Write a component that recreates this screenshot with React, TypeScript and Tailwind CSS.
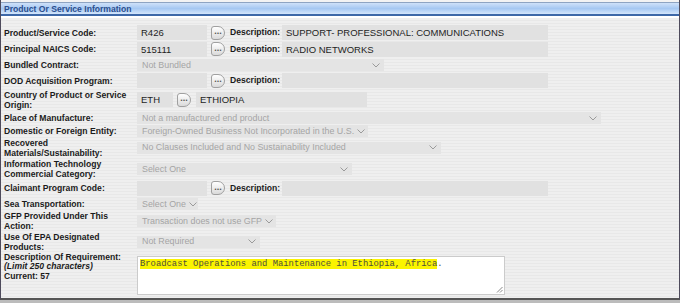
import React from 'react'

const labelCls =
  "w-[136px] shrink-0 pl-[3px] font-bold text-[8.6px] leading-[10px] text-[#1b1b1b]"

const Dots = () => (
  <span className="ml-[4px] inline-flex h-[14px] w-[14px] shrink-0 items-center justify-center rounded-l-[3px] rounded-r-[7px] border border-[#a0a0a0] bg-[linear-gradient(#ffffff,#dadada)] pb-[2px] text-[9px] leading-none font-bold text-[#555]">
    ...
  </span>
)

const Field = ({ w, value }: { w: string; value?: string }) => (
  <div className={`${w} h-[15px] shrink-0 truncate bg-[#e1e1e1] pl-[4px] text-[9.5px] leading-[15px] text-[#1e1e1e]`}>
    {value}
  </div>
)

const Chevron = () => (
  <svg width="8" height="5" viewBox="0 0 8 5" className="shrink-0">
    <polyline points="0.5,0.5 4,4 7.5,0.5" fill="none" stroke="#9a9a9a" strokeWidth="1" />
  </svg>
)

const Select = ({ w, value }: { w: string; value: string }) => (
  <div className={`${w} flex h-[12px] shrink-0 items-center justify-between gap-[3px] bg-[#e4e4e4] pl-[5px] pr-[4px] text-[8.9px] leading-none text-[#a4a4a4]`}>
    <span className="whitespace-nowrap">{value}</span>
    <Chevron />
  </div>
)

const Desc = ({ value }: { value?: string }) => (
  <>
    <span className="ml-[5px] w-[52px] shrink-0 font-bold text-[8.6px] text-[#1b1b1b]">Description:</span>
    <Field w="w-[266px]" value={value} />
  </>
)

const Row = ({ h, label, children }: { h: string; label: React.ReactNode; children: React.ReactNode }) => (
  <div className={`flex items-center ${h}`}>
    <div className={labelCls}>{label}</div>
    {children}
  </div>
)

export default function App() {
  return (
    <div className="h-[303px] w-[680px] bg-[#bcbcbc] font-['Liberation_Sans',Arial,sans-serif]">
      <div className="h-[300px] border-x border-b-2 border-x-[#4e4b5c] border-b-[#555] bg-[image:repeating-linear-gradient(to_bottom,#efefef_0px,#efefef_2px,#e8e8e8_2px,#e8e8e8_3px)]">
        <div className="h-[2px] bg-[#f3f3f3]" />
        <div className="flex h-[14px] items-center border-t border-b-2 border-t-[#8ea4c2] border-b-[#3d68a8] bg-[linear-gradient(#cfe1f9,#a6c8f2_50%,#d3e5fb)] pl-[3px] pt-[2px] text-[8.6px] font-bold text-[#2a4e8e]">
          Product Or Service Information
        </div>
        <div className="h-[2px] bg-white" />

        <div className="pt-[6px]">
          <Row h="h-[17px]" label="Product/Service Code:">
            <Field w="w-[70px]" value="R426" />
            <Dots />
            <Desc value="SUPPORT- PROFESSIONAL: COMMUNICATIONS" />
          </Row>
          <Row h="h-[16px]" label="Principal NAICS Code:">
            <Field w="w-[70px]" value="515111" />
            <Dots />
            <Desc value="RADIO NETWORKS" />
          </Row>
          <Row h="h-[16px]" label="Bundled Contract:">
            <Select w="w-[247px]" value="Not Bundled" />
          </Row>
          <Row h="h-[15px]" label="DOD Acquisition Program:">
            <Field w="w-[70px]" />
            <Dots />
            <Desc />
          </Row>
          <Row h="h-[23px]" label={<>Country of Product or Service<br />Origin:</>}>
            <Field w="w-[36px]" value="ETH" />
            <Dots />
            <div className="ml-[5px]">
              <Field w="w-[171px]" value="ETHIOPIA" />
            </div>
          </Row>
          <Row h="h-[14px]" label="Place of Manufacture:">
            <Select w="w-[464px]" value="Not a manufactured end product" />
          </Row>
          <Row h="h-[12px]" label="Domestic or Foreign Entity:">
            <Select w="w-[231px]" value="Foreign-Owned Business Not Incorporated in the U.S." />
          </Row>
          <Row h="h-[21px]" label={<>Recovered<br />Materials/Sustainability:</>}>
            <Select w="w-[304px]" value="No Clauses Included and No Sustainability Included" />
          </Row>
          <Row h="h-[22px]" label={<>Information Technology<br />Commercial Category:</>}>
            <Select w="w-[215px]" value="Select One" />
          </Row>
          <Row h="h-[16px]" label="Claimant Program Code:">
            <Field w="w-[70px]" />
            <Dots />
            <Desc />
          </Row>
          <Row h="h-[16px]" label="Sea Transportation:">
            <Select w="w-[61px]" value="Select One" />
          </Row>
          <Row h="h-[18px]" label={<>GFP Provided Under This<br />Action:</>}>
            <Select w="w-[139px]" value="Transaction does not use GFP" />
          </Row>
          <Row h="h-[23px]" label={<>Use Of EPA Designated<br />Products:</>}>
            <Select w="w-[123px]" value="Not Required" />
          </Row>
          <div className="flex items-start">
            <div className="w-[136px] shrink-0 pl-[3px] text-[8.6px] font-bold leading-[9.4px] text-[#1b1b1b]">
              Description Of Requirement:
              <br />
              <i>(Limit 250 characters)</i>
              <br />
              Current: 57
            </div>
            <div className="relative mt-[3px] h-[39px] w-[368px] border border-[#cbcbcb] bg-white pl-[2px] pt-[1px] font-['Liberation_Mono','DejaVu_Sans_Mono',monospace] text-[8.85px] leading-[12px] text-[#4f4f3a]">
              <span className="bg-[#fbf400]">Broadcast Operations and Maintenance in Ethiopia, Africa</span>.
              <svg width="7" height="7" viewBox="0 0 7 7" className="absolute right-[1px] bottom-[1px]">
                <line x1="6.5" y1="1" x2="1" y2="6.5" stroke="#888" strokeWidth="1" />
                <line x1="6.5" y1="4" x2="4" y2="6.5" stroke="#888" strokeWidth="1" />
              </svg>
            </div>
          </div>
        </div>
      </div>
    </div>
  )
}
